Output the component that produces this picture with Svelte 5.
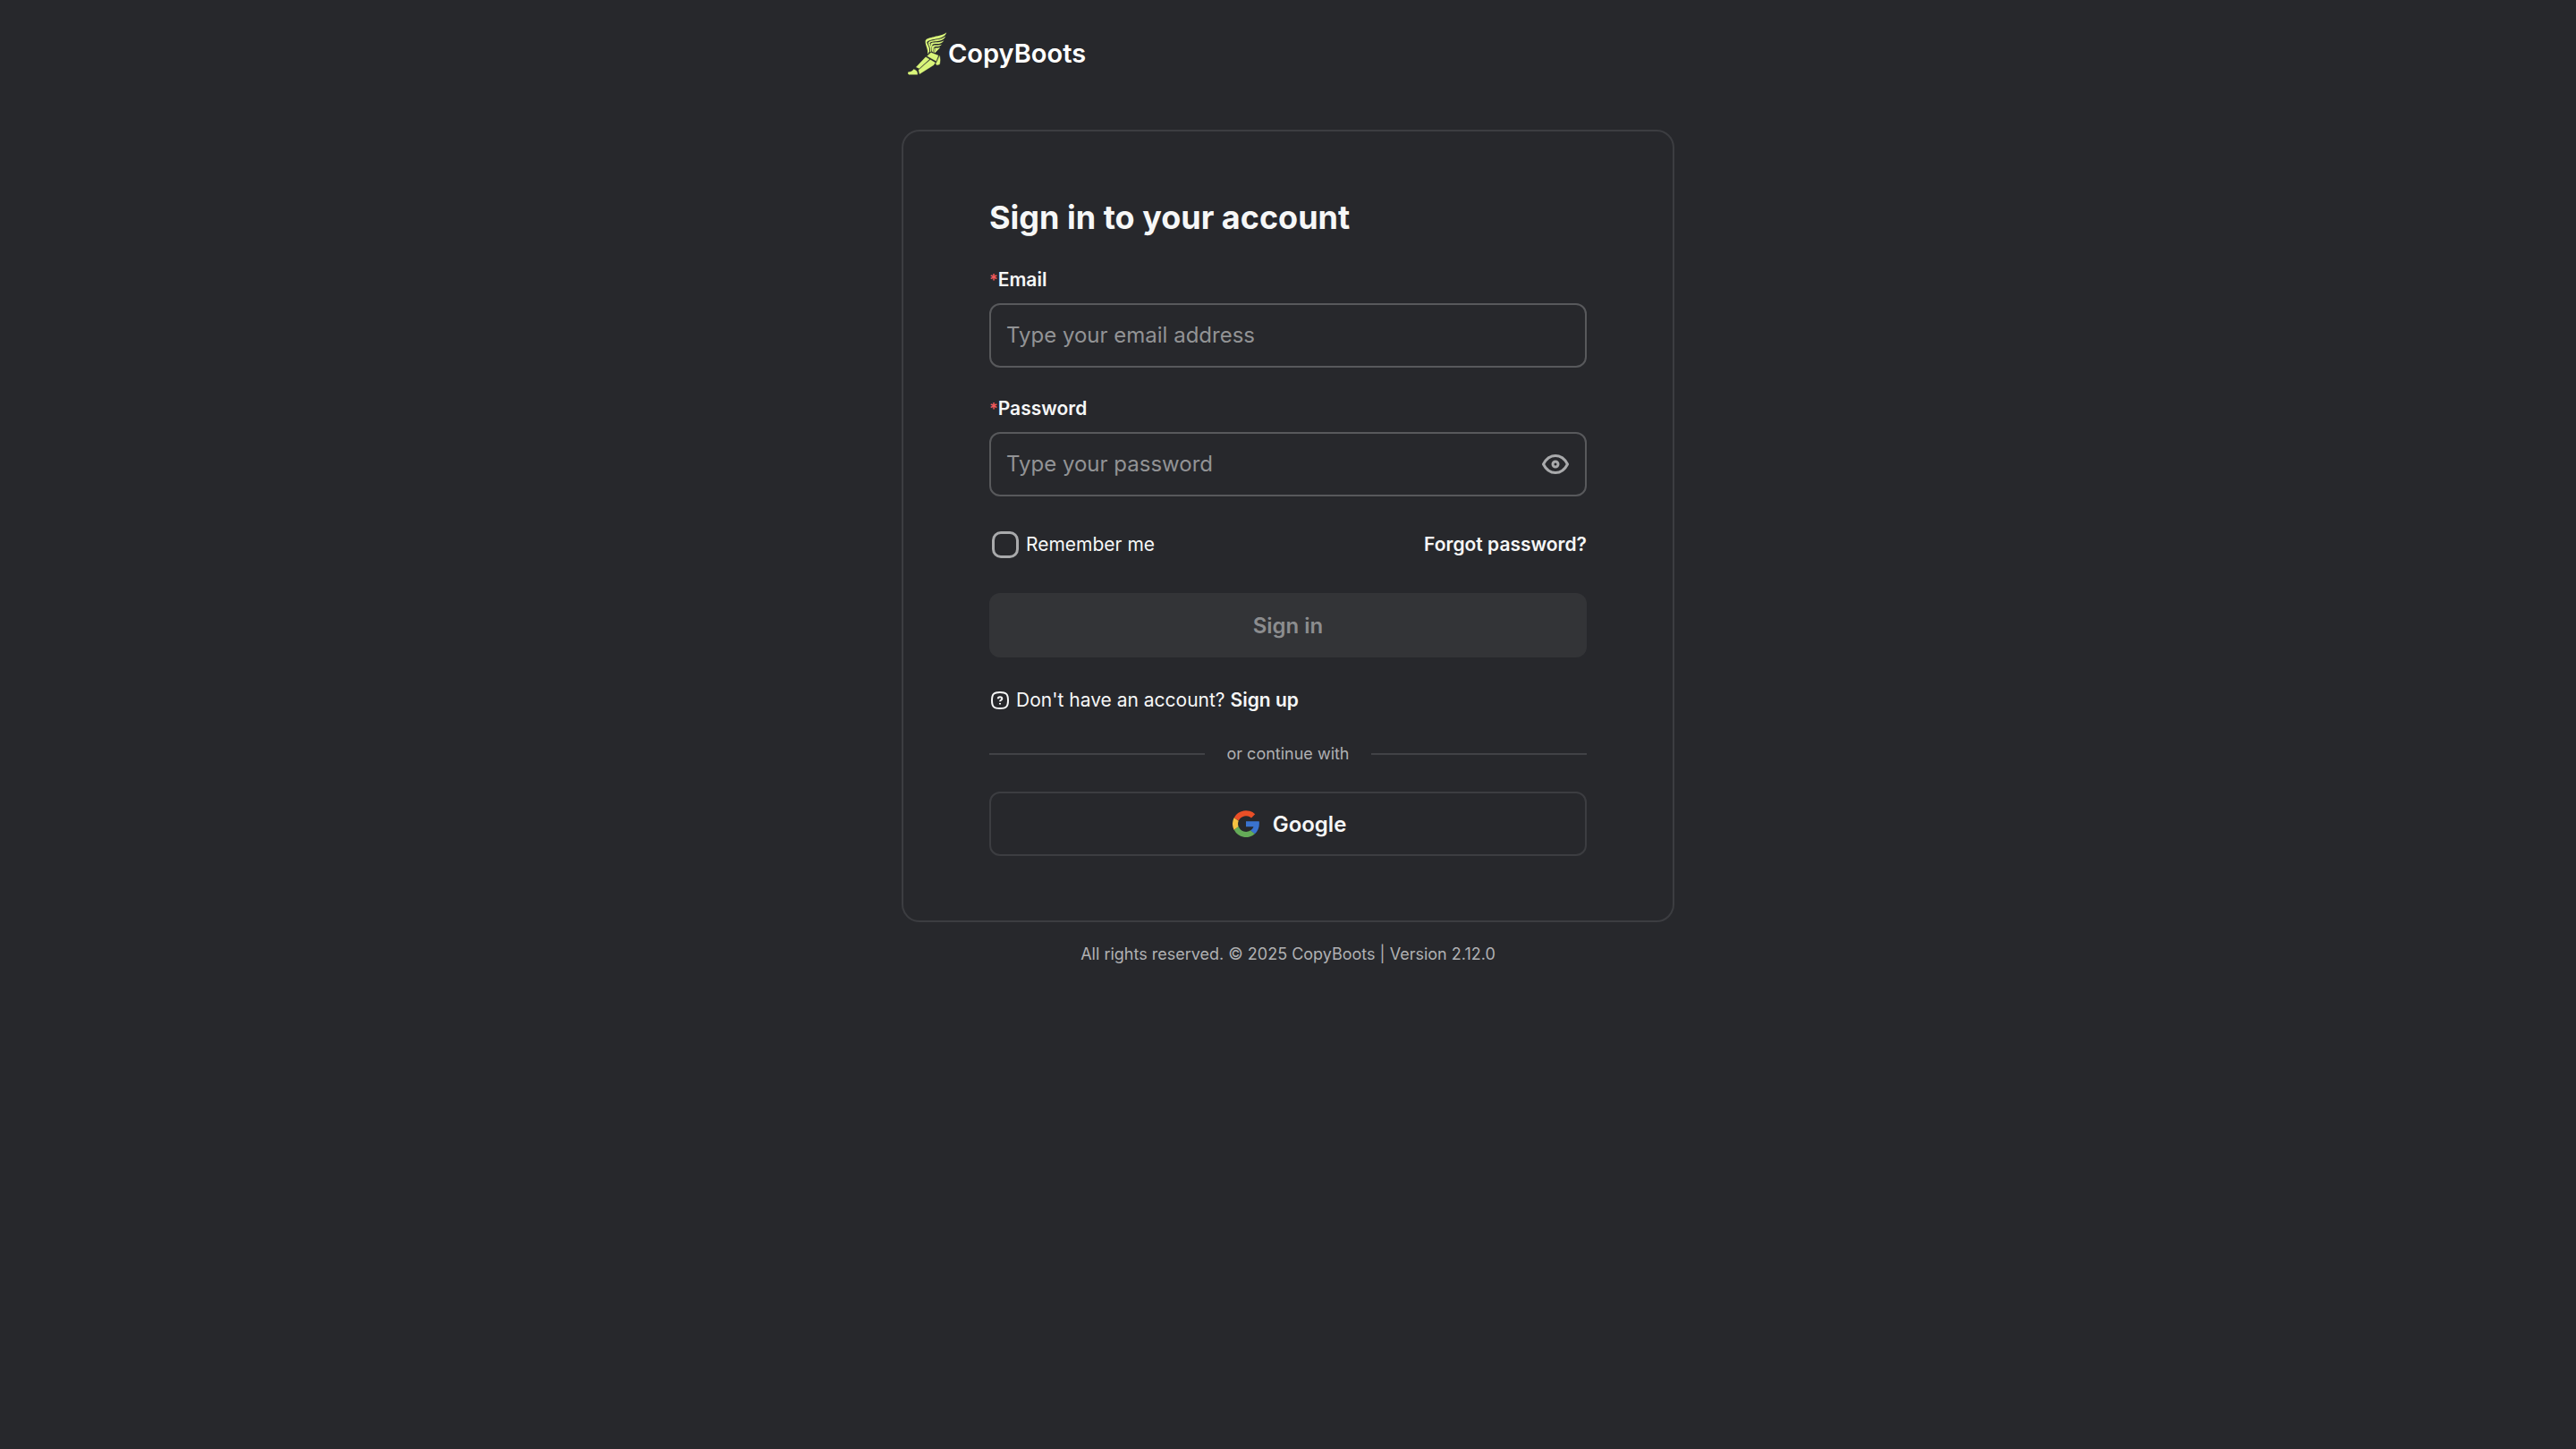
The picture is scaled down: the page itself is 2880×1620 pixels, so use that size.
<script>
  let email = $state('');
  let password = $state('');
  let remember = $state(false);
  let visible = $state(false);
  let ready = $derived(email !== '' && password !== '');
</script>

<div class="page">
  <header class="brand">
    <svg class="boot" viewBox="45 50 128 140" aria-hidden="true">
      <path d="M171 51C167 63 157 68 143 71C127 74 110 76 107 83C109 92 117 99 115 113L109 122C112 104 101 96 102 78C105 69 118 68 130 65C147 61 161 60 171 51Z" />
      <path d="M168 63C163 74 153 78 141 79C129 80 119 81 116 86C119 93 125 101 121 113L117 115C121 100 112 94 111 84C115 77 126 77 139 74C151 72 161 69 168 63Z" />
      <path d="M163 76C158 85 149 88 139 88C131 88 126 89 124 92C127 98 130 105 126 114L123 113C126 103 120 96 119 88C123 82 132 84 142 83C151 82 157 80 163 76Z" />
      <path d="M157 88C152 95 146 97 139 97C134 97 131 98 130 100C132 105 133 110 130 116L127 115C130 108 127 102 126 95C129 91 136 93 143 92C149 92 153 91 157 88Z" />
      <path d="M150 99C147 105 142 109 134 117L131 116C135 109 133 105 133 102C139 100 145 102 150 99Z" />
      <g class="foot">
        <path d="M120 116L144 126L137 144L108 128Z" />
        <path d="M148 127C151 136 151 146 148 155L139 157L136 153L141 143Z" />
        <path d="M103 131L115 138L82 168L72 164Z" />
        <path d="M118 140L134 149L129 157L83 186L80 173Z" />
        <path d="M64 171C72 173 77 178 76 188L48 188C45 186 44 182 47 180C54 180 60 177 64 171Z" />
      </g>
    </svg>
    <span class="name">CopyBoots</span>
  </header>

  <main class="card">
    <h1>Sign in to your account</h1>
    <form onsubmit={(e) => e.preventDefault()}>
      <div class="field">
        <label for="email"><span class="req">*</span>Email</label>
        <div class="box">
          <input id="email" type="email" placeholder="Type your email address" bind:value={email} />
        </div>
      </div>
      <div class="field">
        <label for="password"><span class="req">*</span>Password</label>
        <div class="box">
          <input id="password" type={visible ? 'text' : 'password'} placeholder="Type your password" bind:value={password} />
          <button class="eye" type="button" aria-label="Show password" onclick={() => (visible = !visible)}>
            <svg viewBox="0 0 30 22" aria-hidden="true">
              <path d="M1.5 11C4.5 5 9.5 1.5 15 1.500S25.500 5 28.500 11C25.500 17 20.500 20.500 15 20.500S4.500 17 1.500 11Z" />
              <circle cx="15" cy="11" r="3" />
            </svg>
          </button>
        </div>
      </div>
      <div class="options">
        <label class="remember"><input type="checkbox" bind:checked={remember} />Remember me</label>
        <a href="#forgot">Forgot password?</a>
      </div>
      <button class="submit" type="submit" disabled={!ready}>Sign in</button>
    </form>

    <p class="signup">
      <svg viewBox="0 0 20 20" aria-hidden="true">
        <path d="M10 1C17 1 19 3 19 10S17 19 10 19S1 17 1 10S3 1 10 1Z" />
        <path d="M7.800 8.200C7.800 5.600 12.300 5.600 12.300 8.200C12.300 9.800 10 9.700 10 11.300M10 13V14.500" />
      </svg>
      <span>Don't have an account? <a href="#signup">Sign up</a></span>
    </p>

    <div class="divider"><span>or continue with</span></div>

    <button class="google" type="button">
      <svg viewBox="0 0 30 30" aria-hidden="true">
        <path fill="#ea4f27" d="M1.700 8.300A15 15 0 0 1 25.200 4.200L21 8.500A9 9 0 0 0 6.800 11.500Z" />
        <path fill="#f5c142" d="M1.700 8.300L6.700 11.700A9 9 0 0 0 6.700 18.300L1.700 21.900A15 15 0 0 1 1.700 8.300Z" />
        <path fill="#65ab58" d="M1.700 21.800L6.700 18.100A9 9 0 0 0 20.200 22.300L25 26.200A15 15 0 0 1 1.700 21.800Z" />
        <path fill="#3a73cf" d="M15 12.200H29.700C30.500 18 28.500 23 25 26.300L20.100 22.400C21.800 21.300 23 19.800 23.400 18.200H15Z" />
      </svg>
      Google
    </button>
  </main>

  <footer>All rights reserved. © 2025 CopyBoots | Version 2.12.0</footer>
</div>

<style>
  :global(body) {
    margin: 0;
    background: #27282c;
  }
  .page {
    max-width: 864px;
    margin: 0 auto;
    font-family: Inter, sans-serif;
    font-size: 21px;
    line-height: 28px;
    color: #f6f7f7;
  }
  .brand {
    display: flex;
    align-items: center;
    gap: 1px;
    padding: 36px 7px 0;
    height: 48px;
    margin-bottom: 61px;
  }
  .boot {
    width: 44px;
    height: 48px;
    fill: #d9f57a;
  }
  .foot {
    stroke: #d9f57a;
    stroke-width: 1;
  }
  .name {
    font-size: 29px;
    font-weight: 600;
    color: #fff;
  }
  .card {
    border: 2px solid #3c3d41;
    border-radius: 20px;
    padding: 72px 96px;
  }
  h1 {
    margin: 0 0 32px;
    font-size: 36px;
    line-height: 48px;
    font-weight: 700;
  }
  .field {
    margin-bottom: 32px;
  }
  .field label {
    display: block;
    margin-bottom: 12px;
    font-weight: 600;
  }
  .req {
    font-size: 18px;
    line-height: 18px;
    color: #f0595b;
  }
  .box {
    display: flex;
    align-items: center;
    box-sizing: border-box;
    height: 72px;
    padding: 0 18px 0 17px;
    border: 2px solid #58595c;
    border-radius: 12px;
  }
  .box input {
    flex: 1;
    min-width: 0;
    padding: 0;
    border: 0;
    outline: 0;
    background: none;
    font: 24px/32px Inter, sans-serif;
    color: inherit;
  }
  .box input::placeholder {
    color: #929395;
    opacity: 1;
  }
  button {
    font-family: inherit;
    cursor: pointer;
  }
  .eye {
    display: flex;
    padding: 0;
    border: 0;
    background: none;
  }
  .eye svg {
    width: 30px;
    height: 22px;
    fill: none;
    stroke: #a9aaac;
    stroke-width: 3;
    stroke-linejoin: round;
  }
  .options {
    display: flex;
    align-items: center;
    justify-content: space-between;
    height: 32px;
    margin: 38px 0;
  }
  .remember {
    display: flex;
    align-items: center;
    gap: 8px;
  }
  .remember input {
    appearance: none;
    box-sizing: border-box;
    width: 30px;
    height: 30px;
    margin: 0 0 0 3px;
    border: 3px solid #a9aaac;
    border-radius: 10px;
  }
  .remember input:checked {
    background: #d9f57a;
  }
  a {
    color: inherit;
    font-weight: 600;
    text-decoration: none;
  }
  .submit,
  .google {
    display: flex;
    align-items: center;
    justify-content: center;
    box-sizing: border-box;
    width: 100%;
    height: 72px;
    border: 0;
    border-radius: 12px;
    font-size: 24px;
    font-weight: 600;
    color: #f6f7f7;
    background: none;
  }
  .submit {
    background: #d9f57a;
    color: #27282c;
  }
  .submit:disabled {
    background: #333437;
    color: #8c8d8f;
    cursor: default;
  }
  .signup {
    display: flex;
    align-items: center;
    gap: 8px;
    margin: 34px 0 32px;
    padding-left: 2px;
  }
  .signup svg {
    width: 20px;
    height: 20px;
    fill: none;
    stroke: #f6f7f7;
    stroke-width: 2;
  }
  .divider {
    display: flex;
    align-items: center;
    gap: 24px;
    margin-bottom: 28px;
    font-size: 18px;
    color: #b0b1b3;
  }
  .divider::before,
  .divider::after {
    content: '';
    flex: 1;
    height: 2px;
    background: #414246;
  }
  .google {
    gap: 15px;
    padding: 0 0 0 3px;
    border: 2px solid #3c3d41;
  }
  .google svg {
    width: 30px;
    height: 30px;
  }
  footer {
    padding: 22px 0;
    text-align: center;
    font-size: 18px;
    color: #b0b1b3;
  }
</style>
